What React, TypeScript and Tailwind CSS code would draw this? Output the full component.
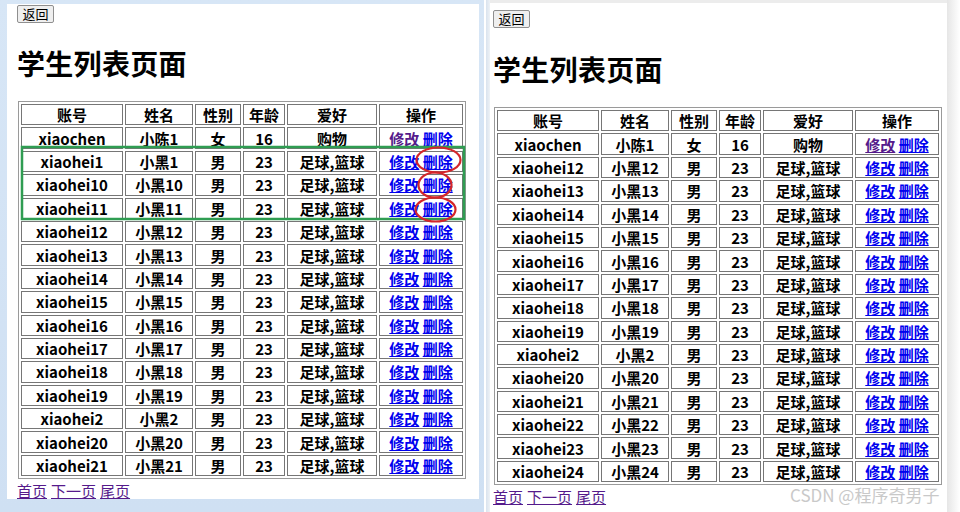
import React from "react";

type Row = { id: string; name: string; sex: string; age: string; hobby: string };

const leftIds = ["1", "10", "11", "12", "13", "14", "15", "16", "17", "18", "19", "2", "20", "21"];
const rightIds = ["12", "13", "14", "15", "16", "17", "18", "19", "2", "20", "21", "22", "23", "24"];

const first: Row = { id: "xiaochen", name: "小陈1", sex: "女", age: "16", hobby: "购物" };
const mk = (ids: string[]): Row[] => [
  first,
  ...ids.map((n) => ({ id: "xiaohei" + n, name: "小黑" + n, sex: "男", age: "23", hobby: "足球,篮球" })),
];

const cell = "border border-[#767676] p-0 h-[21.4px] leading-[19px] text-center align-middle";

function StudentTable({ rows }: { rows: Row[] }) {
  return (
    <table className="border-separate border-spacing-[2px] border border-[#9a9a9a] table-fixed w-[448px] text-[15px] font-bold text-black">
      <colgroup>
        <col className="w-[102px]" />
        <col className="w-[68px]" />
        <col className="w-[46px]" />
        <col className="w-[42px]" />
        <col className="w-[90px]" />
        <col className="w-[84px]" />
      </colgroup>
      <thead>
        <tr>
          {["账号", "姓名", "性别", "年龄", "爱好", "操作"].map((h) => (
            <th key={h} className={cell}>
              {h}
            </th>
          ))}
        </tr>
      </thead>
      <tbody>
        {rows.map((r, i) => (
          <tr key={r.id}>
            <td className={cell}>{r.id}</td>
            <td className={cell}>{r.name}</td>
            <td className={cell}>{r.sex}</td>
            <td className={cell}>{r.age}</td>
            <td className={cell}>{r.hobby}</td>
            <td className={cell}>
              <span className={i === 0 ? "underline text-[#551a8b]" : "underline text-[#0000ee]"}>修改</span>{" "}
              <span className="underline text-[#0000ee]">删除</span>
            </td>
          </tr>
        ))}
      </tbody>
    </table>
  );
}

function Page({ rows, top }: { rows: Row[]; top: "left" | "right" }) {
  return (
    <div className="flex flex-col items-start">
      <button className="h-[18px] w-[37px] border border-[#8f8f8f] bg-[#efefef] text-[13px] leading-[16px] text-black rounded-[2px]">
        返回
      </button>
      <h1 className={(top === "left" ? "mt-[20px] " : "mt-[21px] ") + "h-[40px] leading-[40px] text-[28px] font-bold text-black tracking-[0.3px]"}>
        学生列表页面
      </h1>
      <div className="mt-[18px] ml-[1px]">
        <StudentTable rows={rows} />
      </div>
      <div className="h-[20px] leading-[20px] text-[15px] text-[#551a8b] mt-[2px] flex gap-[4px]">
        <span className="underline">首页</span>
        <span className="underline">下一页</span>
        <span className="underline">尾页</span>
      </div>
    </div>
  );
}

export default function App() {
  return (
    <div
      className="relative w-[960px] h-[512px] overflow-hidden bg-white flex"
      style={{ fontFamily: '"Noto Sans CJK SC", "Noto Sans", sans-serif' }}
    >
      {/* left window */}
      <div className="w-[484px] h-[512px] bg-gradient-to-b from-[#d7e6f6] to-[#cfe0f3] pl-[7px] pt-[4px] pr-[5px] pb-[13px]">
        <div className="w-full h-full bg-white pl-[10px] pt-[1px]">
          <Page rows={mk(leftIds)} top="left" />
        </div>
      </div>
      {/* gap */}
      <div className="w-[2px] h-[512px] bg-white" />
      {/* right window */}
      <div className="w-[474px] h-[512px] bg-[#f3f3f3] flex">
        <div className="w-[4px] h-full bg-gradient-to-r from-[#d9e3ee] to-[#eef2f6]" />
        <div className="flex flex-col">
          <div className="h-[3px] w-[457px] bg-[#ececec]" />
          <div className="w-[457px] flex-1 bg-white pl-[3px] pt-[7px]">
            <Page rows={mk(rightIds)} top="right" />
          </div>
        </div>
        <div className="flex-1 bg-gradient-to-r from-[#e6e6e6] to-[#ffffff]" />
      </div>

      {/* annotations */}
      <svg className="absolute left-0 top-0 pointer-events-none" width="960" height="512" viewBox="0 0 960 512">
        <rect x="22" y="147" width="442" height="72" fill="none" stroke="#2f9d52" strokeWidth="2.5" />
        <ellipse cx="438.5" cy="160" rx="22" ry="12.5" fill="none" stroke="#d4262a" strokeWidth="2.2" />
        <ellipse cx="435" cy="185" rx="16.5" ry="12.5" fill="none" stroke="#d4262a" strokeWidth="2.2" />
        <ellipse cx="435.5" cy="209.5" rx="20" ry="12" fill="none" stroke="#d4262a" strokeWidth="2.2" />
      </svg>

      <div className="absolute left-[790px] top-[485px] text-[17px] leading-[20px] text-[#c9c9c9] whitespace-nowrap">
        CSDN @程序奇男子
      </div>
    </div>
  );
}
